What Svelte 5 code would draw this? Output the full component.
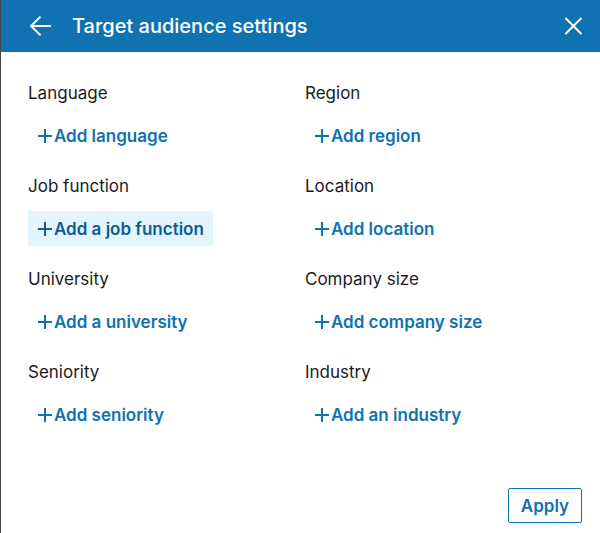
<script>
  const fields = [
    { label: 'Language', action: 'Add language' },
    { label: 'Region', action: 'Add region' },
    { label: 'Job function', action: 'Add a job function', active: true },
    { label: 'Location', action: 'Add location' },
    { label: 'University', action: 'Add a university' },
    { label: 'Company size', action: 'Add company size' },
    { label: 'Seniority', action: 'Add seniority' },
    { label: 'Industry', action: 'Add an industry' }
  ];
</script>

<div class="panel">
  <header>
    <button class="icon" type="button" aria-label="Back">
      <svg width="24" height="24" viewBox="0 0 24 24" aria-hidden="true">
        <path d="M12.5 2.6 3 12l9.5 9.4M3 12h20" />
      </svg>
    </button>
    <h1>Target audience settings</h1>
    <button class="icon" type="button" aria-label="Close">
      <svg width="24" height="24" viewBox="0 0 24 24" aria-hidden="true">
        <path d="m4.4 4 16 16M20.4 4l-16 16" />
      </svg>
    </button>
  </header>

  <main>
    {#each fields as field, i}
      <section aria-labelledby="field-{i}">
        <h2 id="field-{i}">{field.label}</h2>
        <button class="add" class:active={field.active} type="button">
          <svg width="14" height="14" viewBox="0 0 14 14" aria-hidden="true">
            <path d="M7 0v14M0 7h14" />
          </svg>
          {field.action}
        </button>
      </section>
    {/each}
  </main>

  <footer>
    <button class="apply" type="button">Apply</button>
  </footer>
</div>

<style>
  :global(body) {
    margin: 0;
    background: #fff;
  }

  .panel {
    box-sizing: border-box;
    display: flex;
    flex-direction: column;
    min-height: 100vh;
    border-left: 1px solid #444548;
    font-family: Inter, 'Liberation Sans', sans-serif;
    color: #1b1b1b;
  }

  button {
    font: inherit;
    margin: 0;
    padding: 0;
    border: 0;
    background: none;
    cursor: pointer;
  }

  svg {
    display: block;
    flex: none;
    fill: none;
    stroke: currentColor;
    stroke-width: 2;
  }

  header {
    display: flex;
    align-items: center;
    gap: 20px;
    height: 52px;
    padding: 0 15px 0 27px;
    background: #1072b0;
    color: #fff;
  }

  .icon {
    color: #fff;
  }

  h1 {
    flex: 1;
    margin: 0;
    font-size: 20px;
    font-weight: 500;
    line-height: 28px;
  }

  main {
    flex: 1;
    display: grid;
    grid-template-columns: 1fr 1fr;
    align-content: start;
    row-gap: 21px;
    padding: 29px 18px 28px 27px;
  }

  section {
    display: flex;
    flex-direction: column;
    align-items: flex-start;
    gap: 13px;
  }

  h2 {
    margin: 0;
    font-size: 17px;
    font-weight: 400;
    line-height: 24px;
  }

  .add {
    display: flex;
    align-items: center;
    gap: 2px;
    height: 35px;
    padding: 0 9px 0 10px;
    border-radius: 2px;
    font-size: 17px;
    font-weight: 600;
    color: #1072b0;
  }

  .add.active {
    background: #e3f4fc;
    color: #0a5c96;
  }

  footer {
    display: flex;
    justify-content: flex-end;
    padding: 0 18px 10px;
  }

  .apply {
    height: 35px;
    padding: 0 12px;
    border: 1px solid #1072b0;
    border-radius: 2px;
    font-size: 17px;
    font-weight: 600;
    color: #1072b0;
  }
</style>
